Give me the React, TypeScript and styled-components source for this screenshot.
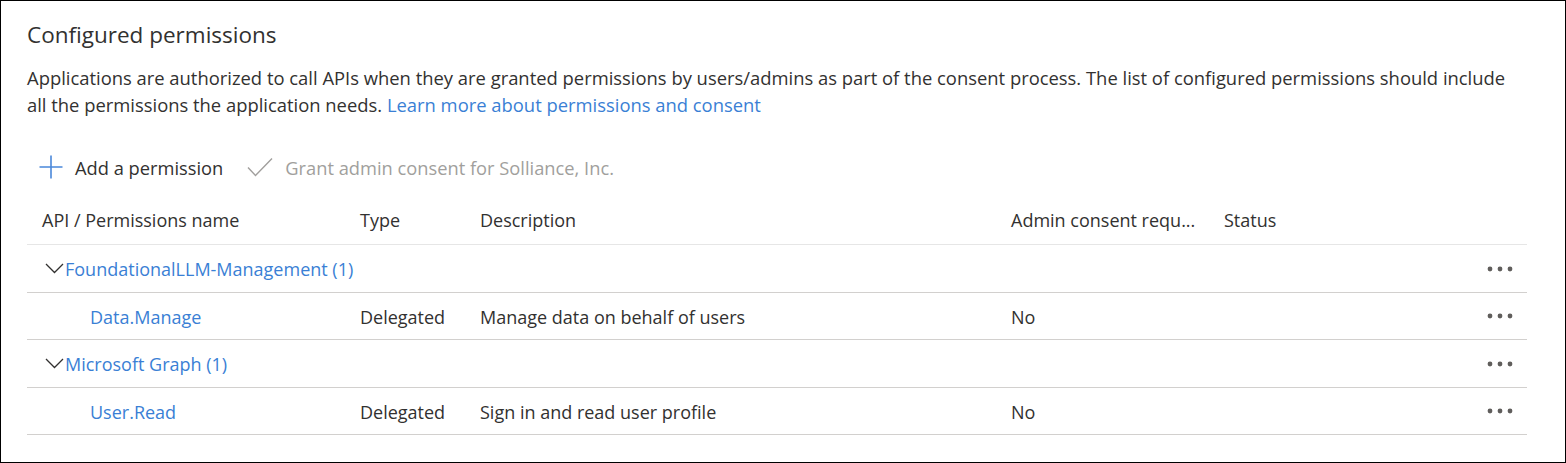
import styled, { createGlobalStyle } from 'styled-components';

const GlobalStyle = createGlobalStyle`
	html, body {
		margin: 0;
		padding: 0;
		background: #ffffff;
	}
	body {
		font-family: "Segoe UI", "Open Sans", "Noto Sans", sans-serif;
		color: #323130;
	}
`;

const columns = ['API / Permissions name', 'Type', 'Description', 'Admin consent requ...', 'Status'];

const groups = [
	{
		name: 'FoundationalLLM-Management (1)',
		items: [{ name: 'Data.Manage', type: 'Delegated', description: 'Manage data on behalf of users', admin: 'No' }]
	},
	{
		name: 'Microsoft Graph (1)',
		items: [{ name: 'User.Read', type: 'Delegated', description: 'Sign in and read user profile', admin: 'No' }]
	}
];

function PlusIcon() {
	return (
		<svg width="24" height="24" viewBox="0 0 24 24">
			<path d="M12 0.5v23M0.5 12h23" stroke="#4a88da" strokeWidth="1.6" fill="none" />
		</svg>
	);
}

function CheckIcon() {
	return (
		<svg width="26" height="20" viewBox="0 0 26 20">
			<path d="M1 10.5l7.5 8L25 1.5" stroke="#a19f9d" strokeWidth="1.4" fill="none" />
		</svg>
	);
}

function Chevron() {
	return (
		<svg width="19" height="11" viewBox="0 0 19 11">
			<path d="M1 1l8.5 8.5L18 1" stroke="#323130" strokeWidth="1.3" fill="none" />
		</svg>
	);
}

function MoreDots() {
	return (
		<svg width="26" height="6" viewBox="0 0 26 6">
			<circle cx="3" cy="3" r="2.4" fill="#605e5c" />
			<circle cx="13" cy="3" r="2.4" fill="#605e5c" />
			<circle cx="23" cy="3" r="2.4" fill="#605e5c" />
		</svg>
	);
}

function App() {
	return (
		<>
			<GlobalStyle />
			<Frame>
				<Title>Configured permissions</Title>
				<Description>
					Applications are authorized to call APIs when they are granted permissions by users/admins as part of
					the consent process. The list of configured permissions should include all the permissions the
					application needs. <Link>Learn more about permissions and consent</Link>
				</Description>
				<Toolbar>
					<ToolButton>
						<PlusIcon />
						<span>Add a permission</span>
					</ToolButton>
					<ToolButton disabled>
						<CheckIcon />
						<span>Grant admin consent for Solliance, Inc.</span>
					</ToolButton>
				</Toolbar>
				<Table>
					<HeaderRow>
						{columns.map((col) => (
							<HeaderCell key={col}>{col}</HeaderCell>
						))}
						<HeaderCell />
					</HeaderRow>
					{groups.map((group) => (
						<div key={group.name}>
							<Row $group>
								<GroupCell>
									<Chevron />
									<LinkText>{group.name}</LinkText>
								</GroupCell>
								<MoreCell>
									<MoreDots />
								</MoreCell>
							</Row>
							{group.items.map((item) => (
								<Row key={item.name}>
									<Cell $indent>
										<LinkText>{item.name}</LinkText>
									</Cell>
									<Cell>{item.type}</Cell>
									<Cell>{item.description}</Cell>
									<Cell>{item.admin}</Cell>
									<Cell />
									<MoreCell>
										<MoreDots />
									</MoreCell>
								</Row>
							))}
						</div>
					))}
				</Table>
			</Frame>
		</>
	);
}

const Frame = styled.div`
	width: 1566px;
	height: 463px;
	box-sizing: border-box;
	border: 1px solid #000000;
	padding: 19px 38px 0 26px;
	background: #ffffff;
	overflow: hidden;
`;

const Title = styled.h2`
	margin: 0;
	font-size: 22.5px;
	font-weight: 400;
	line-height: 30px;
	color: #323130;
`;

const Description = styled.p`
	margin: 14px 0 0;
	max-width: 1496px;
	font-size: 18.4px;
	line-height: 27px;
	color: #323130;
`;

const Link = styled.a`
	color: #3a7fd5;
	text-decoration: none;
	cursor: pointer;
`;

const LinkText = styled.span`
	color: #3a7fd5;
	cursor: pointer;
`;

const Toolbar = styled.div`
	display: flex;
	align-items: center;
	height: 44px;
	margin-top: 27px;
`;

const ToolButton = styled.div<{ disabled?: boolean }>`
	display: flex;
	align-items: center;
	gap: 12px;
	height: 100%;
	padding: 0 12px 0 12px;
	font-size: 18.3px;
	color: ${(p) => (p.disabled ? '#a19f9d' : '#323130')};
	cursor: ${(p) => (p.disabled ? 'default' : 'pointer')};
`;

const Table = styled.div`
	margin-top: 7px;
	width: 1500px;
	font-size: 18px;
`;

const gridColumns = '318px 120px 531px 213px 1fr 60px';

const HeaderRow = styled.div`
	display: grid;
	grid-template-columns: ${gridColumns};
	height: 48px;
	align-items: center;
	border-bottom: 1px solid #e6e6e6;
`;

const HeaderCell = styled.div`
	padding-left: 15px;
	color: #323130;
	white-space: nowrap;
`;

const Row = styled.div<{ $group?: boolean }>`
	display: grid;
	grid-template-columns: ${(p) => (p.$group ? '1fr 60px' : gridColumns)};
	height: ${(p) => (p.$group ? '47px' : '46px')};
	align-items: center;
	border-bottom: 1px solid #d2d0ce;
`;

const Cell = styled.div<{ $indent?: boolean }>`
	padding-left: ${(p) => (p.$indent ? '63px' : '15px')};
	padding-top: 2px;
	color: #323130;
	white-space: nowrap;
`;

const GroupCell = styled.div`
	display: flex;
	align-items: center;
	gap: 1px;
	padding-left: 18px;
`;

const MoreCell = styled.div`
	display: flex;
	align-items: center;
	margin-left: 20px;
`;

export default App;
